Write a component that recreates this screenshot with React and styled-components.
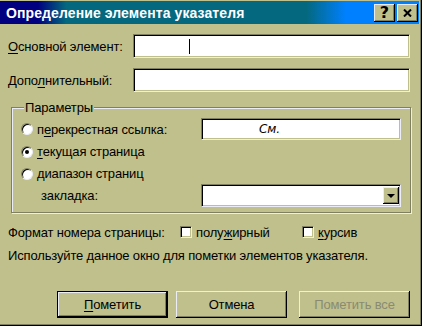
import React from 'react';
import styled, { createGlobalStyle } from 'styled-components';

const face = '#c0c08c';
const shadow = '#808060';
const hilite = '#ececf8';

const GlobalStyle = createGlobalStyle`
  html, body { margin: 0; padding: 0; background: ${face}; }
  body {
    font-family: "Liberation Sans", Arial, sans-serif;
    font-size: 13px;
    letter-spacing: -0.15px;
    color: #000;
  }
`;

const Window = styled.div`
  width: 422px;
  height: 326px;
  box-sizing: border-box;
  background: ${face};
  padding: 1px 3px 3px 0;
  box-shadow: inset -1px -1px #000, inset -2px -2px ${shadow};
  display: flex;
  flex-direction: column;
`;

const TitleBar = styled.div`
  height: 23px;
  display: flex;
  align-items: center;
  padding: 0 1px 0 6px;
  background: linear-gradient(to right, #000080 0px, #000080 38px, #04687e 66px, #04687e 306px, #0080ff 346px, #0080ff 100%);
  color: #fff;
  font: bold 14px "Liberation Sans", Arial, sans-serif;
  letter-spacing: 0.1px;
`;

const TitleText = styled.div`
  flex: 1;
  white-space: nowrap;
`;

const TitleButtons = styled.div`
  display: flex;
  gap: 2px;
`;

const TitleButton = styled.div`
  width: 21px;
  height: 18px;
  box-sizing: border-box;
  background: ${face};
  box-shadow: inset -1px -1px #000, inset 1px 1px ${hilite}, inset -2px -2px ${shadow};
  display: flex;
  align-items: center;
  justify-content: center;
  color: #000;
  font: bold 16px "DejaVu Sans", sans-serif;
  line-height: 1;
`;

const Body = styled.div`
  flex: 1;
  display: flex;
  flex-direction: column;
  padding: 10px 9px 0 8px;
`;

const FieldRow = styled.div`
  display: flex;
  align-items: center;
  height: 24px;
  margin-bottom: 10px;
`;

const Label = styled.div`
  width: ${({ $w }) => $w || 125}px;
  flex: none;
  white-space: nowrap;
`;

const Sunken = styled.div`
  box-sizing: border-box;
  background: #fff;
  border: 1px solid;
  border-color: ${shadow} ${hilite} ${hilite} ${shadow};
  box-shadow: inset 1px 1px #000, inset -1px -1px ${face};
`;

const TextBox = styled(Sunken)`
  flex: 1;
  height: ${({ $h }) => $h || 24}px;
  display: flex;
  align-items: center;
  padding-left: ${({ $pad }) => $pad || 3}px;
`;

const Caret = styled.span`
  width: 1px;
  height: 15px;
  background: #000;
`;

const Group = styled.fieldset`
  margin: -2px -1px 0 3px;
  padding: 3px 9px 5px 9px;
  border: 1px solid ${shadow};
  box-shadow: inset 1px 1px ${hilite}, 1px 1px ${hilite};
  display: flex;
  flex-direction: column;
`;

const Legend = styled.legend`
  padding: 0 1px;
  margin-left: 3px;
  line-height: 15px;
  background: ${face};
`;

const OptRow = styled.div`
  display: flex;
  align-items: center;
  height: ${({ $h }) => $h}px;
`;

const OptLabel = styled.div`
  width: 180px;
  flex: none;
  display: flex;
  align-items: center;
  gap: 4px;
  white-space: nowrap;
  padding-left: ${({ $indent }) => $indent || 0}px;
  box-sizing: border-box;
`;

const Radio = styled.span`
  width: 12px;
  height: 12px;
  box-sizing: border-box;
  border-radius: 50%;
  border: 1px solid;
  border-color: ${shadow} ${hilite} ${hilite} ${shadow};
  background: #fff;
  box-shadow: inset 1px 1px #000;
  display: flex;
  align-items: center;
  justify-content: center;
  &::after {
    content: '';
    width: 4px;
    height: 4px;
    border-radius: 50%;
    background: ${({ $on }) => ($on ? '#000' : 'transparent')};
  }
`;

const Field = styled(Sunken)`
  width: 200px;
  height: ${({ $h }) => $h}px;
  display: flex;
  align-items: center;
`;

const Italic = styled.span`
  font-style: italic;
  padding-left: 57px;
  font-family: "DejaVu Sans", sans-serif;
  font-size: 12px;
`;

const DropButton = styled.div`
  margin-left: auto;
  margin-right: 1px;
  width: 16px;
  height: 17px;
  box-sizing: border-box;
  background: ${face};
  box-shadow: inset -1px -1px #000, inset 1px 1px ${hilite}, inset -2px -2px ${shadow};
  display: flex;
  align-items: center;
  justify-content: center;
  &::after {
    content: '';
    border-left: 4px solid transparent;
    border-right: 4px solid transparent;
    border-top: 4px solid #000;
    margin-top: 1px;
  }
`;

const FormatRow = styled.div`
  display: flex;
  align-items: center;
  height: 16px;
  margin-top: 11px;
`;

const Check = styled(Sunken)`
  width: 12px;
  height: 12px;
  flex: none;
  margin-right: 4px;
`;

const CheckItem = styled.div`
  display: flex;
  align-items: center;
  width: ${({ $w }) => $w}px;
`;

const Info = styled.div`
  height: 16px;
  margin-top: 7px;
  display: flex;
  align-items: center;
  white-space: nowrap;
`;

const ButtonRow = styled.div`
  display: flex;
  justify-content: flex-end;
  margin-top: 28px;
`;

const Button = styled.div`
  width: 111px;
  height: 27px;
  box-sizing: border-box;
  margin-left: ${({ $gap }) => $gap || 0}px;
  background: ${face};
  display: flex;
  align-items: center;
  justify-content: center;
  color: ${({ $disabled }) => ($disabled ? '#8a8a72' : '#000')};
  box-shadow: ${({ $default }) =>
    $default
      ? `inset 0 0 0 1px #000, inset -2px -2px #000, inset 2px 2px ${hilite}, inset -3px -3px ${shadow}`
      : `inset -1px -1px #000, inset 1px 1px ${hilite}, inset -2px -2px ${shadow}`};
`;

const U = styled.span`
  text-decoration: underline;
  text-underline-offset: 2px;
`;

const CloseIcon = () => (
  <svg width="9" height="8" viewBox="0 0 9 8">
    <path d="M1 0.5 L8 7.5 M8 0.5 L1 7.5" stroke="#000" strokeWidth="2" />
  </svg>
);

export default function App() {
  return (
    <>
      <GlobalStyle />
      <Window>
        <TitleBar>
          <TitleText>Определение элемента указателя</TitleText>
          <TitleButtons>
            <TitleButton>?</TitleButton>
            <TitleButton><CloseIcon /></TitleButton>
          </TitleButtons>
        </TitleBar>
        <Body>
          <FieldRow>
            <Label><U>О</U>сновной элемент:</Label>
            <TextBox $pad={55}><Caret /></TextBox>
          </FieldRow>
          <FieldRow>
            <Label>Допо<U>л</U>нительный:</Label>
            <TextBox />
          </FieldRow>
          <Group>
            <Legend>Параметры</Legend>
            <OptRow $h={22}>
              <OptLabel><Radio /><span>п<U>е</U>рекрестная ссылка:</span></OptLabel>
              <Field $h={22}><Italic>См.</Italic></Field>
            </OptRow>
            <OptRow $h={23}>
              <OptLabel><Radio $on /><span><U>т</U>екущая страница</span></OptLabel>
            </OptRow>
            <OptRow $h={21}>
              <OptLabel><Radio /><span><U>д</U>иапазон страниц</span></OptLabel>
            </OptRow>
            <OptRow $h={23}>
              <OptLabel $indent={20}>закладка:</OptLabel>
              <Field $h={23}><DropButton /></Field>
            </OptRow>
          </Group>
          <FormatRow>
            <Label $w={172}>Формат номера страницы:</Label>
            <CheckItem $w={122}><Check /><span>полу<U>ж</U>ирный</span></CheckItem>
            <CheckItem $w={100}><Check /><span><U>к</U>урсив</span></CheckItem>
          </FormatRow>
          <Info>Используйте данное окно для пометки элементов указателя.</Info>
          <ButtonRow>
            <Button $default><span><U>П</U>ометить</span></Button>
            <Button $gap={8}>Отмена</Button>
            <Button $gap={12} $disabled>Пометить все</Button>
          </ButtonRow>
        </Body>
      </Window>
    </>
  );
}
